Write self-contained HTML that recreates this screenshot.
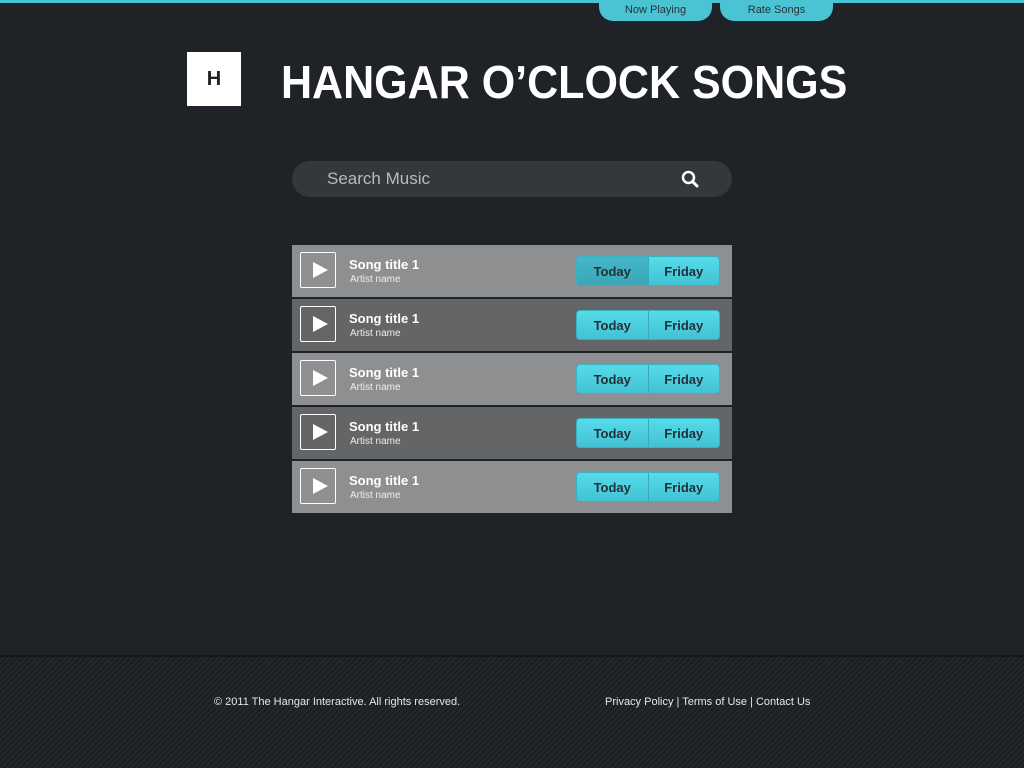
<!DOCTYPE html>
<html><head><style>
*{margin:0;padding:0;box-sizing:border-box}
body{width:1024px;height:768px;background:#1f2226;font-family:"Liberation Sans",sans-serif;position:relative;overflow:hidden}
.topline{position:absolute;left:0;top:0;width:1024px;height:3px;background:#4ac3d3}
.tab{position:absolute;top:0;height:21px;background:#4ac3d3;border-radius:0 0 14px 14px;color:#2a3138;font-size:11px;text-align:center;line-height:21px}
.logo{position:absolute;left:187px;top:52px;width:54px;height:54px;background:#fff;color:#222;font-weight:bold;font-size:20px;text-align:center;line-height:54px}
h1{position:absolute;left:281px;top:55px;color:#fff;font-size:46px;font-weight:bold;white-space:nowrap;transform:scaleX(0.935);transform-origin:left top}
.search{position:absolute;left:292px;top:161px;width:440px;height:36px;border-radius:18px;background:#34373b;color:#b8bbbe;font-size:17px;line-height:36px;padding-left:35px}
.search svg{position:absolute;right:33px;top:9px}
.row{position:absolute;left:292px;width:440px;height:52px}
.l{background:#8e8f91}.d{background:#646567}
.play{position:absolute;left:8px;top:7px;width:36px;height:36px;border:1.5px solid #fff;border-radius:2px}
.play:after{content:"";position:absolute;left:12px;top:9px;border-left:15px solid #fff;border-top:8px solid transparent;border-bottom:8px solid transparent}
.t{position:absolute;left:57px;top:12px;color:#fff;font-weight:bold;font-size:13px}
.a{position:absolute;left:58px;top:29px;color:#eee;font-size:10px}
.btn{position:absolute;left:284px;top:11px;width:144px;height:30px;border-radius:4px;background:linear-gradient(#56dbe9,#42c2d3);border:1px solid #3bb2c2;display:flex;font-weight:bold;font-size:13px;color:#233038}
.btn span{flex:1;text-align:center;line-height:29px}
.btn span:first-child{border-right:1px solid #3aa9b8}
.sel span:first-child{background:linear-gradient(#45b8c8,#3aa6b6)}
.footer{position:absolute;left:0;top:655px;width:1024px;height:113px;border-top:2px solid #141619;background:repeating-linear-gradient(135deg,#1c1e21 0 2px,#24272b 2px 4px);color:#e6e6e6;font-size:11px}
</style></head><body>
<div class="topline"></div>
<div class="tab" style="left:599px;width:113px">Now Playing</div>
<div class="tab" style="left:720px;width:113px">Rate Songs</div>
<div class="logo">H</div>
<h1>HANGAR O’CLOCK SONGS</h1>
<div class="search">Search Music<svg width="18" height="18" viewBox="0 0 18 18"><circle cx="7.5" cy="7.5" r="5.5" fill="none" stroke="#fff" stroke-width="2.5"/><line x1="11.5" y1="11.5" x2="16" y2="16" stroke="#fff" stroke-width="3" stroke-linecap="round"/></svg></div>

<div class="row l" style="top:245px"><div class="play"></div><div class="t">Song title 1</div><div class="a">Artist name</div><div class="btn sel"><span>Today</span><span>Friday</span></div></div>
<div class="row d" style="top:299px"><div class="play"></div><div class="t">Song title 1</div><div class="a">Artist name</div><div class="btn"><span>Today</span><span>Friday</span></div></div>
<div class="row l" style="top:353px"><div class="play"></div><div class="t">Song title 1</div><div class="a">Artist name</div><div class="btn"><span>Today</span><span>Friday</span></div></div>
<div class="row d" style="top:407px"><div class="play"></div><div class="t">Song title 1</div><div class="a">Artist name</div><div class="btn"><span>Today</span><span>Friday</span></div></div>
<div class="row l" style="top:461px"><div class="play"></div><div class="t">Song title 1</div><div class="a">Artist name</div><div class="btn"><span>Today</span><span>Friday</span></div></div>

<div class="footer">
<div style="position:absolute;left:214px;top:39px">© 2011 The Hangar Interactive. All rights reserved.</div>
<div style="position:absolute;left:605px;top:39px">Privacy Policy | Terms of Use | Contact Us</div>
</div>
</body></html>
